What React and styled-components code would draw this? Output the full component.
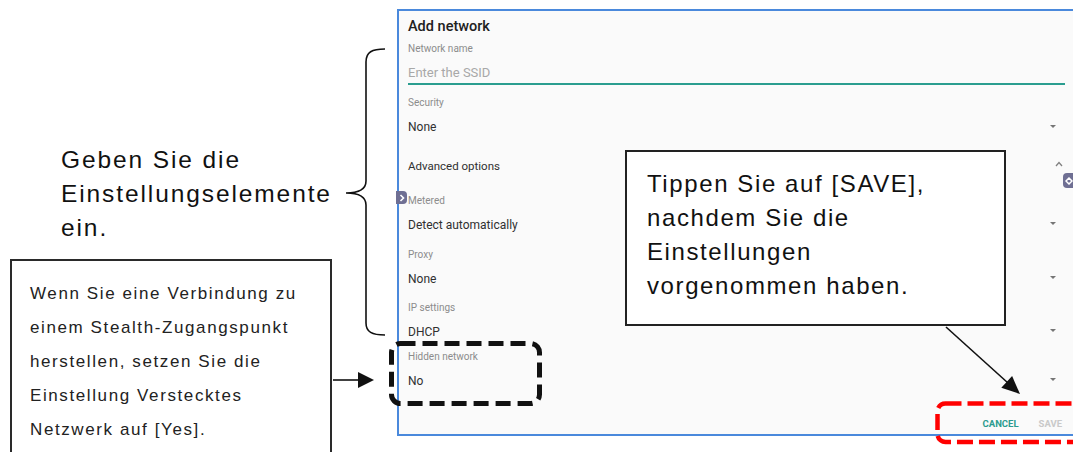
import React from 'react'
import styled, { createGlobalStyle } from 'styled-components'

const GlobalStyle = createGlobalStyle`
  html, body {
    margin: 0;
    padding: 0;
    background: #fff;
    overflow: hidden;
  }
`;

const Page = styled.div`
  position: relative;
  width: 1073px;
  height: 452px;
  overflow: hidden;
  display: flex;
  align-items: flex-start;
  background: #fff;
  font-family: "Liberation Sans", Arial, sans-serif;
`;

const LeftColumn = styled.div`
  flex: none;
  width: 397px;
  display: flex;
  flex-direction: column;
  align-items: flex-start;
`;

const Hint = styled.div`
  margin: 143px 0 0 61px;
  font-size: 24.5px;
  line-height: 34px;
  letter-spacing: 1.9px;
  color: #111;
`;

const NoteBox = styled.div`
  box-sizing: border-box;
  margin: 14px 0 0 10px;
  width: 322px;
  height: 200px;
  border: 2px solid #2a2a2a;
  border-bottom: none;
  padding: 16px 0 0 18px;
  font-size: 17px;
  line-height: 34px;
  letter-spacing: 1.6px;
  color: #222;
`;

const Callout = styled.div`
  position: absolute;
  left: 625px;
  top: 150px;
  box-sizing: border-box;
  width: 381px;
  height: 176px;
  border: 2px solid #222;
  background: #fff;
  padding: 15px 0 0 20px;
  font-size: 24px;
  line-height: 34px;
  letter-spacing: 1.6px;
  color: #111;
`;

const Panel = styled.div`
  position: relative;
  flex: none;
  box-sizing: border-box;
  width: 683px;
  height: 427px;
  margin-top: 9px;
  border: 2px solid #4a89dc;
  border-right: none;
  background: #fafafa;
  padding: 6px 15px 3.5px 9px;
  display: flex;
  flex-direction: column;
  font-family: Roboto, "Noto Sans", sans-serif;
`;

const Title = styled.div`
  font-size: 14.5px;
  font-weight: 500;
  line-height: 20px;
  color: #212121;
`;

const Field = styled.div`
  margin-top: ${p => p.$mt}px;
  display: flex;
  flex-direction: column;
`;

const FieldLabel = styled.div`
  font-size: 10px;
  line-height: 14px;
  color: #8c8c8c;
`;

const Input = styled.div`
  margin-top: 8px;
  font-size: 13px;
  line-height: 18px;
  padding-bottom: 1px;
  color: #a8a8a8;
  border-bottom: 2px solid #2a9d8f;
`;

const FieldValue = styled.div`
  margin-top: ${p => p.$mt ?? 8.5}px;
  display: flex;
  align-items: center;
  justify-content: space-between;
  font-size: 12px;
  line-height: 16px;
  color: #303030;
`;

const Section = styled(FieldValue)`
  font-size: 11.5px;
`;

const Caret = styled.span`
  width: 0;
  height: 0;
  margin: 0 9px 2px 0;
  border-left: 3px solid transparent;
  border-right: 3px solid transparent;
  border-top: 3px solid #757575;
`;

const Footer = styled.div`
  margin-top: auto;
  display: flex;
  justify-content: flex-end;
  gap: 20px;
  padding-right: 3px;
  font-size: 9.5px;
  font-weight: 700;
  line-height: 14px;
`;

const Action = styled.span`
  color: ${p => (p.$disabled ? '#c9c9c9' : '#2b9a8e')};
`;

const SideTab = styled.div`
  position: absolute;
  top: ${p => p.$top}px;
  left: ${p => p.$left}px;
  width: ${p => p.$w}px;
  height: ${p => p.$h}px;
  background: #6f6f93;
  border-radius: ${p => (p.$side === 'left' ? '0 4px 4px 0' : '4px 0 0 4px')};
  display: flex;
  align-items: center;
  justify-content: center;
`;

const Overlay = styled.svg`
  position: absolute;
  left: 0;
  top: 0;
  pointer-events: none;
`;

function SelectField({ mt, label, value }) {
  return (
    <Field $mt={mt}>
      <FieldLabel>{label}</FieldLabel>
      <FieldValue>
        <span>{value}</span>
        <Caret />
      </FieldValue>
    </Field>
  )
}

export default function App() {
  return (
    <>
      <GlobalStyle />
      <Page>
        <LeftColumn>
          <Hint>
            Geben Sie die<br />
            Einstellungselemente<br />
            ein.
          </Hint>
          <NoteBox>
            Wenn Sie eine Verbindung zu<br />
            einem Stealth-Zugangspunkt<br />
            herstellen, setzen Sie die<br />
            Einstellung Verstecktes<br />
            Netzwerk auf [Yes].
          </NoteBox>
        </LeftColumn>

        <Panel>
          <Title>Add network</Title>
          <Field $mt={5}>
            <FieldLabel>Network name</FieldLabel>
            <Input>Enter the SSID</Input>
          </Field>
          <Field $mt={11}>
            <FieldLabel>Security</FieldLabel>
            <FieldValue $mt={9}>
              <span>None</span>
              <Caret />
            </FieldValue>
          </Field>
          <Section $mt={23}>
            <span>Advanced options</span>
            <svg width="8" height="6" viewBox="0 0 8 6" style={{ marginRight: 2, marginBottom: 4 }}>
              <polyline points="1,5 4,1.5 7,5" fill="none" stroke="#808080" strokeWidth="1.3" />
            </svg>
          </Section>
          <SelectField mt={20} label="Metered" value="Detect automatically" />
          <SelectField mt={15.5} label="Proxy" value="None" />
          <SelectField mt={14.5} label="IP settings" value="DHCP" />
          <SelectField mt={10.5} label="Hidden network" value="No" />
          <Footer>
            <Action>CANCEL</Action>
            <Action $disabled>SAVE</Action>
          </Footer>

          <SideTab $side="left" $left={-3} $top={180} $w={11} $h={13}>
            <svg width="6" height="8" viewBox="0 0 6 8">
              <polyline points="1.5,1 4.5,4 1.5,7" fill="none" stroke="#fff" strokeWidth="1.6" />
            </svg>
          </SideTab>
          <SideTab $side="right" $left={664} $top={162} $w={12} $h={15}>
            <svg width="8" height="8" viewBox="0 0 8 8">
              <polygon points="4,1 7,4 4,7 1,4" fill="none" stroke="#fff" strokeWidth="1.5" />
            </svg>
          </SideTab>
        </Panel>

        <Callout>
          Tippen Sie auf [SAVE],<br />
          nachdem Sie die<br />
          Einstellungen<br />
          vorgenommen haben.
        </Callout>

        <Overlay width="1073" height="452" viewBox="0 0 1073 452">
          <path
            d="M385,49 C372,49 366,52 366,62 L366,181 C366,189 360,193 346,193 C360,193 366,197 366,205 L366,323 C366,332 372,335 385,335"
            fill="none"
            stroke="#111"
            strokeWidth="1.6"
          />
          <line x1="333" y1="380" x2="360" y2="380" stroke="#111" strokeWidth="1.6" />
          <polygon points="358,372 374,380 358,388" fill="#111" />
          <line x1="946" y1="327" x2="1008" y2="383" stroke="#111" strokeWidth="1.6" />
          <polygon points="1020,394 1001.3,387.8 1012.1,376" fill="#111" />
          <rect x="391.5" y="343.5" width="148" height="60" rx="9" fill="none" stroke="#111" strokeWidth="5" strokeDasharray="15 7" />
          <rect x="937.5" y="403.5" width="160" height="38.5" rx="8" fill="none" stroke="#ff0000" strokeWidth="4.5" strokeDasharray="16 6" />
        </Overlay>
      </Page>
    </>
  )
}
